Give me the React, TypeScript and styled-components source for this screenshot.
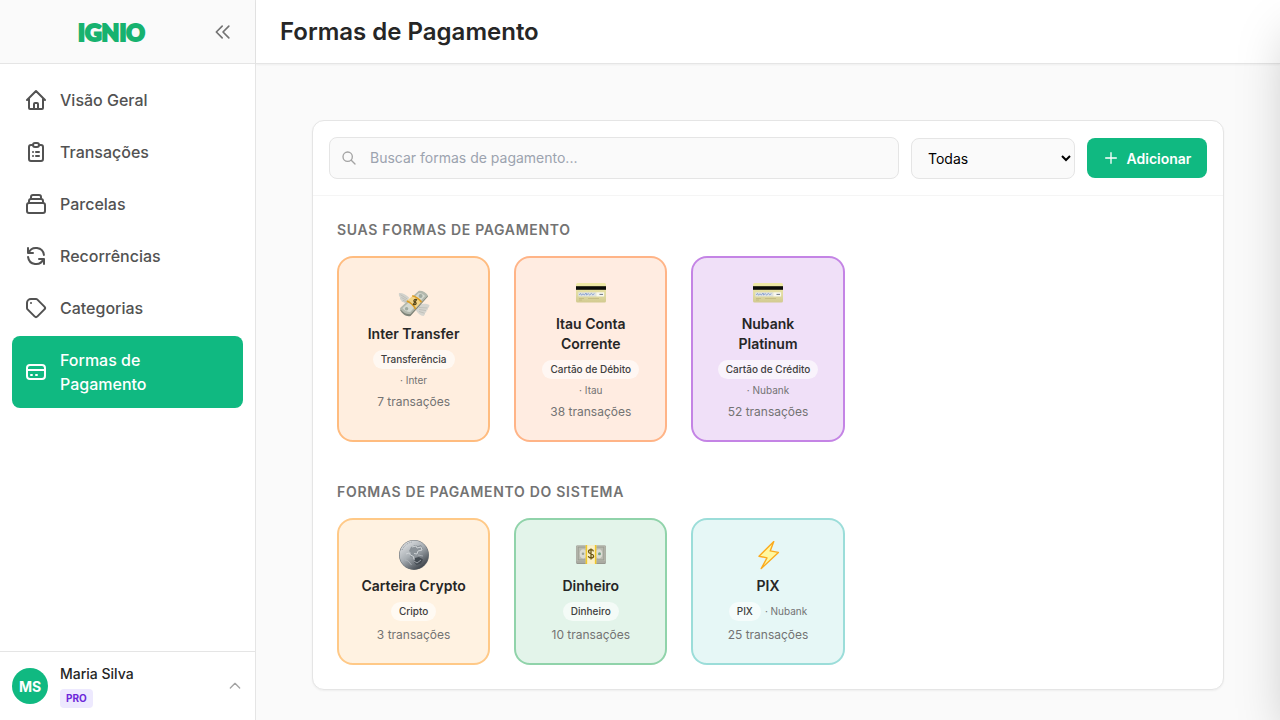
import React from 'react';
import styled, { createGlobalStyle } from 'styled-components';

const GlobalStyle = createGlobalStyle`
  *, *::before, *::after { box-sizing: border-box; }
  html, body { margin: 0; height: 100%; }
  #root { height: 100%; }
  body {
    font-family: Inter, 'Liberation Sans', sans-serif;
    font-size: 14px;
    line-height: 20px;
    color: #262626;
    background: #fafafa;
    overflow: hidden;
  }
  button, input, select { font-family: inherit; font-size: inherit; }
  h1, h2, h3, p, ul { margin: 0; padding: 0; }
`;

const Shell = styled.div`
  display: flex;
  height: 100vh;
`;

const Sidebar = styled.aside`
  display: flex;
  flex-direction: column;
  flex: none;
  width: 256px;
  background: #fff;
  border-right: 1px solid #e5e5e5;
`;

const SidebarHeader = styled.div`
  display: flex;
  align-items: center;
  height: 64px;
  padding: 0 16px;
  background: #fafafa;
  border-bottom: 1px solid #e5e5e5;
`;

const Brand = styled.a`
  flex: 1;
  text-align: center;
  font-family: Lato, Inter, sans-serif;
  font-weight: 900;
  font-size: 23px;
  line-height: 32px;
  color: #17b26f;
  -webkit-text-stroke: 2px #17b26f;
  text-decoration: none;
`;

const CollapseButton = styled.button`
  display: flex;
  padding: 6px;
  border: 0;
  border-radius: 8px;
  background: none;
  color: #737373;
`;

const Nav = styled.nav`
  flex: 1;
  padding: 12px;
`;

const NavList = styled.ul`
  display: flex;
  flex-direction: column;
  gap: 4px;
  list-style: none;
`;

const NavLink = styled.a<{ $active?: boolean }>`
  display: flex;
  align-items: center;
  gap: 12px;
  padding: 12px;
  border-radius: 8px;
  font-size: 16px;
  line-height: 24px;
  font-weight: 500;
  text-decoration: none;
  color: ${(p) => (p.$active ? '#fff' : '#525252')};
  background: ${(p) => (p.$active ? '#10b981' : 'transparent')};
`;

const UserButton = styled.button`
  display: flex;
  align-items: center;
  gap: 12px;
  padding: 12px;
  border: 0;
  border-top: 1px solid #e5e5e5;
  background: #fff;
  color: #a3a3a3;
  text-align: left;
`;

const Avatar = styled.span`
  display: flex;
  align-items: center;
  justify-content: center;
  width: 36px;
  height: 36px;
  border-radius: 50%;
  background: #10b981;
  color: #fff;
  font-size: 14px;
  font-weight: 700;
`;

const UserInfo = styled.span`
  display: flex;
  flex: 1;
  flex-direction: column;
  align-items: flex-start;
  gap: 5px;
`;

const UserName = styled.span`
  font-size: 14px;
  line-height: 20px;
  font-weight: 500;
  color: #262626;
`;

const PlanBadge = styled.span`
  padding: 2px 6px;
  border-radius: 4px;
  background: #ede9fe;
  color: #6d28d9;
  font-size: 10px;
  line-height: 15px;
  font-weight: 700;
`;

const Page = styled.div`
  display: flex;
  flex: 1;
  flex-direction: column;
  min-width: 0;
`;

const PageHeader = styled.header`
  display: flex;
  flex: none;
  align-items: center;
  height: 64px;
  padding: 0 24px;
  background: #fff;
  border-bottom: 1px solid #e5e5e5;
  box-shadow: 0 1px 2px rgba(0, 0, 0, 0.05);
`;

const PageTitle = styled.h1`
  font-size: 24px;
  line-height: 32px;
  font-weight: 600;
`;

const Main = styled.main`
  flex: 1;
  min-height: 0;
  padding: 56px;
`;

const Panel = styled.div`
  background: #fff;
  border: 1px solid #e5e5e5;
  border-radius: 12px;
  box-shadow: 0 1px 2px rgba(0, 0, 0, 0.05);
`;

const Toolbar = styled.div`
  display: flex;
  align-items: center;
  gap: 12px;
  padding: 16px;
  border-bottom: 1px solid #f5f5f5;
`;

const SearchField = styled.label`
  display: flex;
  flex: 1;
  align-items: center;
  gap: 13px;
  height: 42px;
  padding: 0 12px 0 11px;
  border: 1px solid #e5e5e5;
  border-radius: 8px;
  background: #fafafa;
  color: #a3a3a3;
`;

const SearchInput = styled.input`
  flex: 1;
  min-width: 0;
  padding: 0;
  border: 0;
  outline: 0;
  background: none;
  line-height: 20px;
  color: #262626;
  &::placeholder { color: #9ca3af; }
`;

const FilterSelect = styled.select`
  width: 164px;
  height: 41px;
  padding: 0 12px;
  border: 1px solid #e5e5e5;
  border-radius: 8px;
  background: #fafafa;
  color: #000;
`;

const AddButton = styled.button`
  display: flex;
  align-items: center;
  justify-content: center;
  gap: 8px;
  width: 120px;
  height: 40px;
  padding: 0;
  border: 0;
  border-radius: 8px;
  background: #10b981;
  color: #fff;
  font-weight: 600;
`;

const PanelBody = styled.div`
  display: flex;
  flex-direction: column;
  gap: 40px;
  padding: 24px;
`;

const SectionTitle = styled.h2`
  margin-bottom: 16px;
  font-size: 14px;
  line-height: 20px;
  font-weight: 600;
  letter-spacing: 0.05em;
  text-transform: uppercase;
  color: #737373;
`;

const MethodGrid = styled.div`
  display: grid;
  grid-template-columns: repeat(5, minmax(0, 1fr));
  gap: 24px;
`;

const MethodButton = styled.button<{ $tint: string }>`
  display: flex;
  flex-direction: column;
  align-items: center;
  justify-content: center;
  padding: 20px;
  border: 2px solid ${(p) => p.$tint}80;
  border-radius: 16px;
  background: ${(p) => p.$tint}20;
  background-clip: padding-box;
  color: #262626;
`;

const MethodName = styled.span`
  margin-top: 4px;
  font-size: 14px;
  line-height: 20px;
  font-weight: 600;
`;

const MethodMeta = styled.span`
  display: flex;
  flex-wrap: wrap;
  align-items: center;
  justify-content: center;
  gap: 4px;
  margin: 6px 0;
  font-size: 10px;
  line-height: 15px;
  color: #737373;
`;

const KindBadge = styled.span`
  padding: 2px 8px;
  border-radius: 10px;
  background: rgba(255, 255, 255, 0.6);
  font-weight: 500;
  color: #404040;
`;

const MethodCount = styled.span`
  font-size: 12px;
  line-height: 16px;
  color: #737373;
`;

/* Closed drawer parked just past the right edge; only its shadow reaches the page. */
const Drawer = styled.div`
  position: fixed;
  top: 0;
  bottom: 0;
  left: 100%;
  width: 448px;
  background: #fff;
  box-shadow: 0 25px 50px -12px rgba(0, 0, 0, 0.25);
  pointer-events: none;
`;

const icons = {
  home: 'M3 12l2-2m0 0l7-7 7 7M5 10v10a1 1 0 001 1h3m10-11l2 2m-2-2v10a1 1 0 01-1 1h-3m-6 0a1 1 0 001-1v-4a1 1 0 011-1h2a1 1 0 011 1v4a1 1 0 001 1m-6 0h6',
  clipboard:
    'M9 5H7a2 2 0 00-2 2v12a2 2 0 002 2h10a2 2 0 002-2V7a2 2 0 00-2-2h-2M9 5a2 2 0 002 2h2a2 2 0 002-2M9 5a2 2 0 012-2h2a2 2 0 012 2m-3 7h3m-3 4h3m-6-4h.01M9 16h.01',
  collection:
    'M19 11H5m14 0a2 2 0 012 2v6a2 2 0 01-2 2H5a2 2 0 01-2-2v-6a2 2 0 012-2m14 0V9a2 2 0 00-2-2M5 11V9a2 2 0 012-2m0 0V5a2 2 0 012-2h6a2 2 0 012 2v2M7 7h10',
  refresh:
    'M4 4v5h.582m15.356 2A8.001 8.001 0 004.582 9m0 0H9m11 11v-5h-.581m0 0a8.003 8.003 0 01-15.357-2m15.357 2H15',
  tag: 'M7 7h.01M7 3h5c.512 0 1.024.195 1.414.586l7 7a2 2 0 010 2.828l-7 7a2 2 0 01-2.828 0l-7-7A1.994 1.994 0 013 12V7a4 4 0 014-4z',
  card: 'M3 10h18M7 15h1m4 0h1m-7 4h12a3 3 0 003-3V8a3 3 0 00-3-3H6a3 3 0 00-3 3v8a3 3 0 003 3z',
  collapse: 'M11 19l-7-7 7-7m8 14l-7-7 7-7',
  chevronUp: 'M5 15l7-7 7 7',
  search: 'M21 21l-6-6m2-5a7 7 0 11-14 0 7 7 0 0114 0z',
  plus: 'M12 4v16m8-8H4',
};

function Icon({ name, size }: { name: keyof typeof icons; size: number }) {
  return (
    <svg
      width={size}
      height={size}
      viewBox="0 0 24 24"
      fill="none"
      stroke="currentColor"
      strokeWidth={2}
      strokeLinecap="round"
      strokeLinejoin="round"
      aria-hidden="true"
    >
      <path d={icons[name]} />
    </svg>
  );
}

type Art = 'wings' | 'card' | 'coin' | 'cash' | 'bolt';

function MethodArt({ art }: { art: Art }) {
  return (
    <svg width="32" height="32" viewBox="0 0 32 32" aria-hidden="true">
      {art === 'wings' && (
        <g transform="translate(0 1.500)">
          <path d="M1 3.500C4 3 8 5 11 8l-2 5.500c-2 .3-3-.2-3.700-1-1.300 0-2-.8-2-1.800C1.800 10 1.600 9 2.200 8 1 7 .6 5 1 3.500z" fill="#d2d2cc" />
          <path d="M2.500 5.200L9 9.300M3.500 8l5 2.800M5 10.800l3.500 1.400" stroke="#b8b8b0" strokeWidth=".7" />
          <path d="M21 15c4-1 8-.8 10.500.5-.1 1.500-.7 2.600-1.800 3.200.3 1-.2 2-1.200 2.400.2 1.200-.4 2-1.500 2.300.2 1.200-.6 2.300-1.600 3.200-3-.5-5.500-2.600-7.400-5.600z" fill="#d6d5cf" />
          <path d="M21 18l8.500.5M21 20l7 1M21 22l5.500 1.700" stroke="#b8b8b0" strokeWidth=".7" />
          <path d="M2 20.500L20.500 2.500c3.500-1.500 7 1 9.500 4.500L12.500 26.500C8 27.500 4.500 24.500 2 20.500z" fill="#7e8378" />
          <path d="M1.800 18.800L20.500 1.500C24 .7 27.500 3 30 6L12.500 24.600C8 25 4 22.500 1.800 18.800z" fill="#b3b8ad" />
          <path d="M4.500 18.800L20.700 3.600c2.500 0 4.500 1.100 6.300 2.900L12.200 22.500C9 22.500 6.500 21.200 4.500 18.800z" fill="#d5d9d0" />
          <circle cx="22.600" cy="6.600" r="2" fill="#a1aaa0" />
          <circle cx="8.600" cy="19.200" r="1.700" fill="#a1aaa0" />
          <path d="M9.500 10.800l5-4.400c3.600.8 6.500 3 8.700 6l-5.200 6.200c-2.300-3.800-4.800-6.200-8.500-7.800z" fill="#f3d486" />
          <path d="M8.800 11.600c3.500 1.300 6.600 4.100 8.800 8M14.200 6.300c3.800.9 7 3.200 9.300 6.500" fill="none" stroke="#dd9e22" strokeWidth="1.600" />
          <path d="M18.600 10.500c-1.500-1.300-3.300 0-2.500 1.400.7 1.200 2.200.8 2 2.300-.3 1.200-2 1.100-2.800-.1M18.900 9.600l-3.900 5.700" fill="none" stroke="#57471a" strokeWidth="1.300" />
        </g>
      )}
      {art === 'card' && (
        <>
          <defs>
            <linearGradient id="cardFace" x1="0" y1="0" x2="0" y2="1">
              <stop offset="0" stopColor="#f0eaa6" />
              <stop offset=".6" stopColor="#e0daa2" />
              <stop offset="1" stopColor="#d2ca90" />
            </linearGradient>
          </defs>
          <rect x="1" y="5" width="30" height="19.500" rx="1.500" fill="url(#cardFace)" />
          <rect x="1" y="8.200" width="30" height="3.600" fill="#0c0c08" />
          <rect x="3.300" y="14.300" width="18" height="4.200" fill="#dfe3e2" />
          <rect x="21.300" y="14.300" width="7.800" height="4.200" fill="#f7f7f0" />
          <path d="M4.200 17l1.300-1.600 1 1.700 1.500-1.300 1.300 1.200 1.700-2 .7 2 1.500-1.400 1.500 1.300 1.800-1.500 1.200 1.400 1.700-1.100" fill="none" stroke="#8aa2d2" strokeWidth="1" />
          <path d="M24.500 16.400h3.500" stroke="#6d7580" strokeWidth="1" />
          <path d="M4 20.500h5M4 22h3M13 20.500h11" stroke="#b8af76" strokeWidth=".6" />
        </>
      )}
      {art === 'coin' && (
        <g transform="translate(0 -1)">
          <defs>
            <linearGradient id="coinFace" x1=".15" y1=".05" x2=".8" y2=".95">
              <stop offset="0" stopColor="#dfe1e3" />
              <stop offset=".45" stopColor="#a9afb4" />
              <stop offset="1" stopColor="#3a4047" />
            </linearGradient>
          </defs>
          <circle cx="16" cy="16" r="15" fill="#6b7176" />
          <circle cx="16" cy="16" r="14.400" fill="url(#coinFace)" />
          <path d="M13 8l4-2 3 1 3-1 2 4-3 1-1 4-4 1-2 3-3-1 1-4-2-2z" fill="#8b9298" />
          <path d="M14 8l4-1 1 2 4-1 1 3-4 1-1 3-3-.5M8 15l3-1 1.500 2 3 1.500.5 3 3-1 3 2-2 3" fill="none" stroke="#cfd3d6" strokeWidth="1" />
          <path d="M17 19l4-1 4 2.500-2 4-4.500 1.500L16 23z" fill="#444b52" />
          <path d="M7 21c3 0 4 2 6.500 5M16 22l3 2 4-3M20 16l5 1" fill="none" stroke="#b3b8bc" strokeWidth=".8" />
          <path d="M4 11c2-4 5-7 10-8" fill="none" stroke="#858d94" strokeWidth=".8" strokeDasharray="1 1" />
        </g>
      )}
      {art === 'cash' && (
        <g transform="translate(0 -1.500)">
          <rect x="1.200" y="7" width="29.600" height="18.400" rx=".8" fill="#97978f" />
          <rect x="1.600" y="7" width="28.800" height="16" rx=".6" fill="#b9bab0" />
          <rect x="3.200" y="8.600" width="25.600" height="12.800" fill="none" stroke="#999b91" strokeWidth=".9" />
          <ellipse cx="8.200" cy="15.300" rx="3.400" ry="4.600" fill="#dadbd3" />
          <ellipse cx="23.900" cy="15.300" rx="3.400" ry="4.600" fill="#dadbd3" />
          <circle cx="8" cy="15.300" r="1.300" fill="#9aa298" />
          <circle cx="24.500" cy="15.300" r="1.500" fill="#72a184" />
          <path d="M2 23.800h28" stroke="#c0bfb7" strokeWidth=".6" />
          <rect x="10.800" y="6.600" width="10.400" height="19" fill="#faf0c9" />
          <path d="M11.400 6.600v19M20.600 6.600v19" stroke="#f0c828" strokeWidth="1.500" />
          <path d="M18.500 12.900c-.6-2.400-5-2.200-5 .3 0 2.600 5.100 1.500 5.100 4.300 0 2.600-4.700 2.700-5.300.1M16 10v11" fill="none" stroke="#6b5612" strokeWidth="1.300" />
        </g>
      )}
      {art === 'bolt' && (
        <path
          d="M21.800 1.600L7 16.200l8 1.700-5.800 10.700L26.400 12.400l-8.200-1.500z"
          fill="#fff8a0"
          stroke="#fbaa1d"
          strokeWidth="1.400"
          strokeLinejoin="round"
        />
      )}
    </svg>
  );
}

type Method = { name: string; kind: string; bank?: string; count: number; tint: string; art: Art };

const ownMethods: Method[] = [
  { name: 'Inter Transfer', kind: 'Transferência', bank: 'Inter', count: 7, tint: '#ff7a00', art: 'wings' },
  { name: 'Itau Conta Corrente', kind: 'Cartão de Débito', bank: 'Itau', count: 38, tint: '#ff6a10', art: 'card' },
  { name: 'Nubank Platinum', kind: 'Cartão de Crédito', bank: 'Nubank', count: 52, tint: '#8a0acb', art: 'card' },
];

const systemMethods: Method[] = [
  { name: 'Carteira Crypto', kind: 'Cripto', count: 3, tint: '#ff9410', art: 'coin' },
  { name: 'Dinheiro', kind: 'Dinheiro', count: 10, tint: '#22a855', art: 'cash' },
  { name: 'PIX', kind: 'PIX', bank: 'Nubank', count: 25, tint: '#38bcb4', art: 'bolt' },
];

const navItems: { label: string; icon: keyof typeof icons; active?: boolean }[] = [
  { label: 'Visão Geral', icon: 'home' },
  { label: 'Transações', icon: 'clipboard' },
  { label: 'Parcelas', icon: 'collection' },
  { label: 'Recorrências', icon: 'refresh' },
  { label: 'Categorias', icon: 'tag' },
  { label: 'Formas de Pagamento', icon: 'card', active: true },
];

function MethodSection({ title, methods }: { title: string; methods: Method[] }) {
  return (
    <section>
      <SectionTitle>{title}</SectionTitle>
      <MethodGrid>
        {methods.map((m) => (
          <MethodButton key={m.name} type="button" $tint={m.tint}>
            <MethodArt art={m.art} />
            <MethodName>{m.name}</MethodName>
            <MethodMeta>
              <KindBadge>{m.kind}</KindBadge>
              {m.bank && <span>· {m.bank}</span>}
            </MethodMeta>
            <MethodCount>{m.count} transações</MethodCount>
          </MethodButton>
        ))}
      </MethodGrid>
    </section>
  );
}

export default function App() {
  return (
    <>
      <GlobalStyle />
      <Shell>
        <Sidebar>
          <SidebarHeader>
            <Brand href="#">IGNIO</Brand>
            <CollapseButton type="button" aria-label="Recolher menu">
              <Icon name="collapse" size={20} />
            </CollapseButton>
          </SidebarHeader>
          <Nav>
            <NavList>
              {navItems.map((item) => (
                <li key={item.label}>
                  <NavLink href="#" $active={item.active}>
                    <Icon name={item.icon} size={24} />
                    <span>{item.label}</span>
                  </NavLink>
                </li>
              ))}
            </NavList>
          </Nav>
          <UserButton type="button">
            <Avatar>MS</Avatar>
            <UserInfo>
              <UserName>Maria Silva</UserName>
              <PlanBadge>PRO</PlanBadge>
            </UserInfo>
            <Icon name="chevronUp" size={16} />
          </UserButton>
        </Sidebar>
        <Page>
          <PageHeader>
            <PageTitle>Formas de Pagamento</PageTitle>
          </PageHeader>
          <Main>
            <Panel>
              <Toolbar>
                <SearchField>
                  <Icon name="search" size={16} />
                  <SearchInput
                    type="text"
                    aria-label="Buscar formas de pagamento"
                    placeholder="Buscar formas de pagamento..."
                  />
                </SearchField>
                <FilterSelect aria-label="Filtrar por tipo" defaultValue="todas">
                  <option value="todas">Todas</option>
                  <option value="suas">Suas formas</option>
                  <option value="sistema">Sistema</option>
                </FilterSelect>
                <AddButton type="button">
                  <Icon name="plus" size={16} />
                  Adicionar
                </AddButton>
              </Toolbar>
              <PanelBody>
                <MethodSection title="Suas formas de pagamento" methods={ownMethods} />
                <MethodSection title="Formas de pagamento do sistema" methods={systemMethods} />
              </PanelBody>
            </Panel>
          </Main>
        </Page>
      </Shell>
      <Drawer aria-hidden="true" />
    </>
  );
}
